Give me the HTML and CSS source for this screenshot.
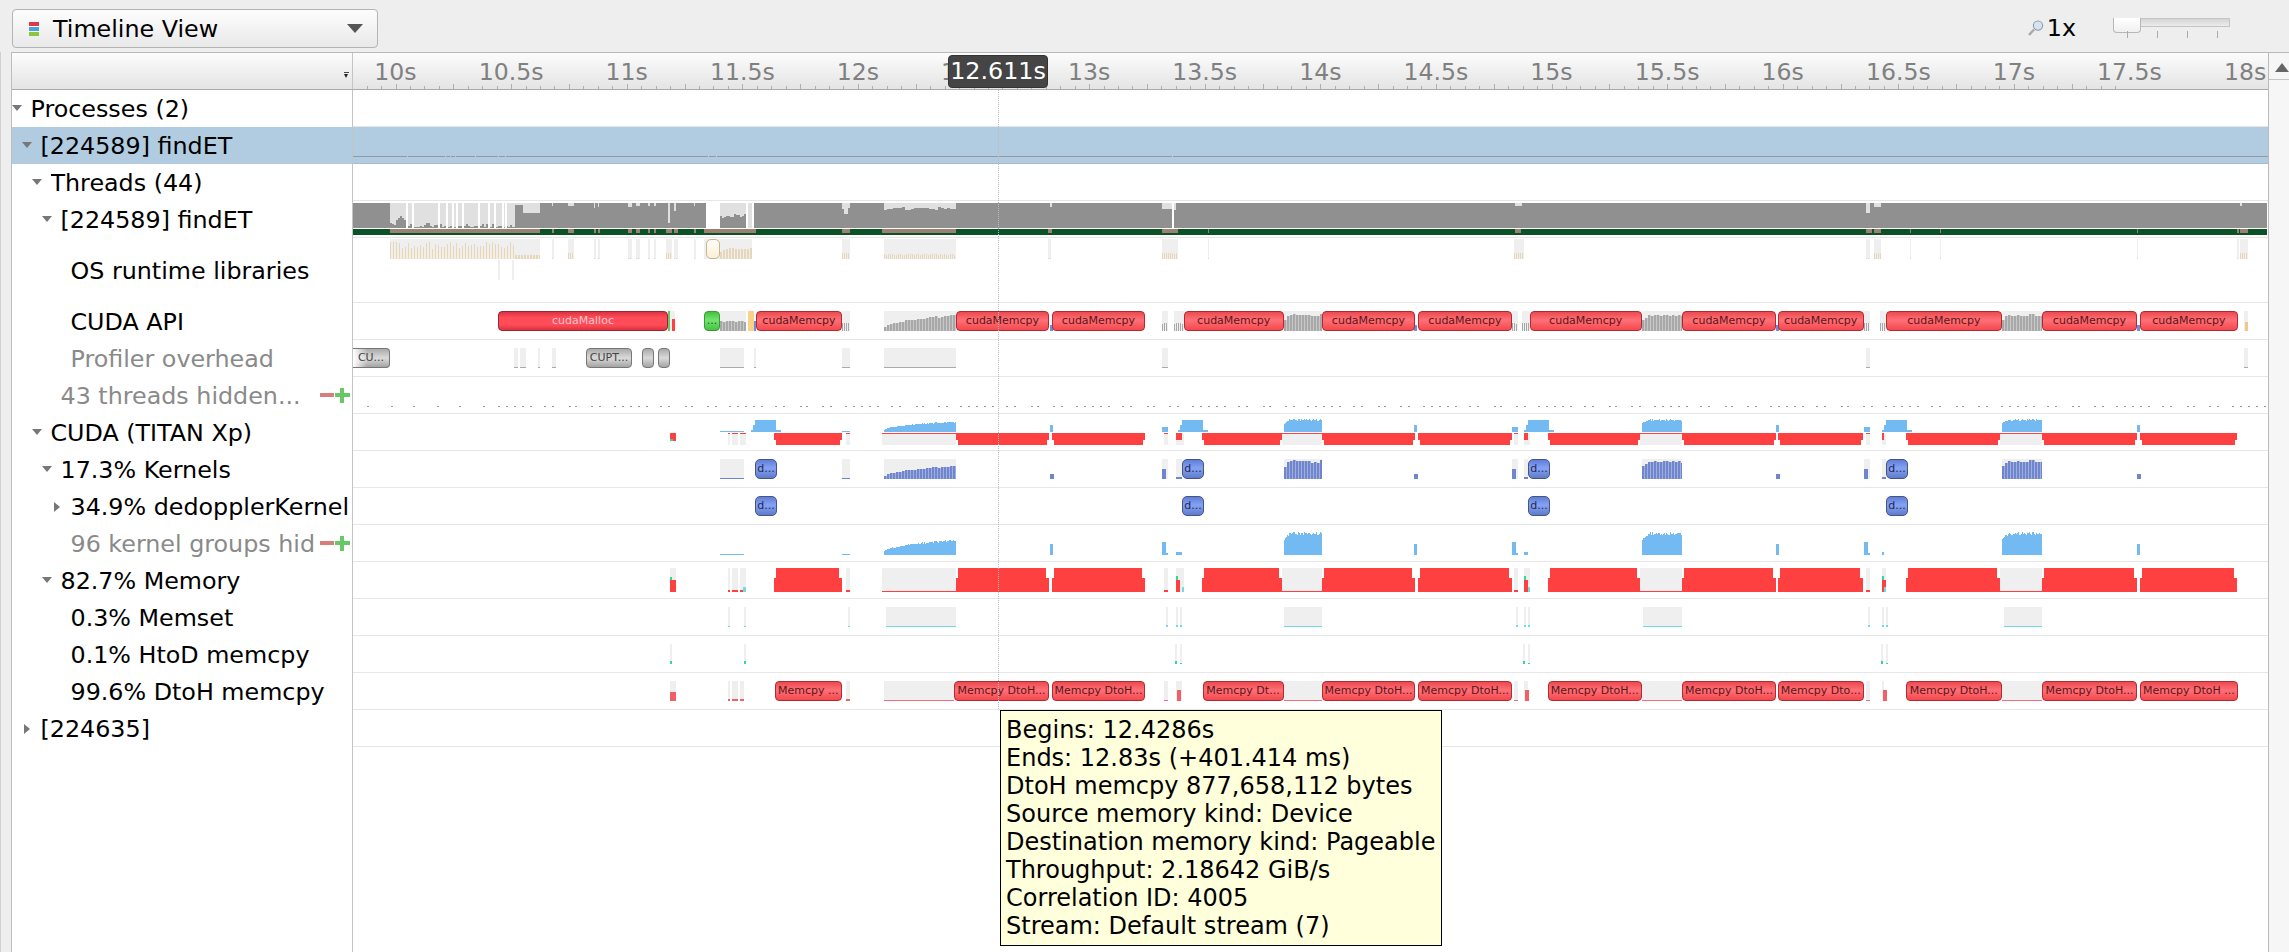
FILE: index.html

```html
<!DOCTYPE html>
<html lang="en">
<head>
    <meta charset="UTF-8">
    <title>Timeline View</title>
    <link rel="stylesheet" href="styles.css">
</head>
<body>
    <div class="toolbar">
        <div class="combo">
            <span class="combo-icon"><i class="c-red"></i><i class="c-blue"></i><i class="c-green"></i></span>
            <span class="combo-text">Timeline View</span>
            <span class="combo-arrow"></span>
        </div>
        <div class="zoom">
            <svg class="lens" width="16" height="16" viewBox="0 0 16 16">
                <path d="M1 15 L6 9.5" stroke="#a8a8a8" stroke-width="2.4" fill="none"/>
                <circle cx="10" cy="5.6" r="4.6" fill="#d6e4f2" stroke="#8f9aa6" stroke-width="1.1"/>
            </svg>
            <span class="zoom-text">1x</span>
            <div class="slider">
                <div class="slider-handle"></div>
                <div class="slider-track"></div>
                <div class="slider-ticks"><i></i><i></i><i></i><i></i></div>
            </div>
        </div>
    </div>

    <div class="view">
        <div class="gutter"></div>
        <div class="main">
            <div class="head">
                <div class="head-tree"><span class="head-menu"></span></div>
                <div class="ruler" id="ruler"></div>
            </div>

            <div class="row">
                <div class="label lv0"><span class="arrow down"></span><span class="name">Processes (2)</span></div>
                <div class="track"></div>
            </div>
            <div class="row selected">
                <div class="label lv1"><span class="arrow down"></span><span class="name">[224589] findET</span></div>
                <div class="track" id="tr-process"></div>
            </div>
            <div class="row">
                <div class="label lv2"><span class="arrow down"></span><span class="name">Threads (44)</span></div>
                <div class="track"></div>
            </div>
            <div class="row">
                <div class="label lv3"><span class="arrow down"></span><span class="name">[224589] findET</span></div>
                <div class="track" id="tr-thread"></div>
            </div>
            <div class="row tall">
                <div class="label lv4"><span class="arrow"></span><span class="name">OS runtime libraries</span></div>
                <div class="track" id="tr-os"></div>
            </div>
            <div class="row">
                <div class="label lv4"><span class="arrow"></span><span class="name">CUDA API</span></div>
                <div class="track" id="tr-api"></div>
            </div>
            <div class="row">
                <div class="label lv4 muted"><span class="arrow"></span><span class="name">Profiler overhead</span></div>
                <div class="track" id="tr-profiler"></div>
            </div>
            <div class="row">
                <div class="label lv3 muted"><span class="arrow"></span><span class="name">43 threads hidden...</span><span class="minus"></span><span class="plus"></span></div>
                <div class="track" id="tr-hidden"></div>
            </div>
            <div class="row">
                <div class="label lv2"><span class="arrow down"></span><span class="name">CUDA (TITAN Xp)</span></div>
                <div class="track" id="tr-cuda"></div>
            </div>
            <div class="row">
                <div class="label lv3"><span class="arrow down"></span><span class="name">17.3% Kernels</span></div>
                <div class="track" id="tr-kernels"></div>
            </div>
            <div class="row">
                <div class="label lv4"><span class="arrow right"></span><span class="name">34.9% dedopplerKernel</span></div>
                <div class="track" id="tr-dedoppler"></div>
            </div>
            <div class="row">
                <div class="label lv4 muted"><span class="arrow"></span><span class="name">96 kernel groups hid</span><span class="minus"></span><span class="plus"></span></div>
                <div class="track" id="tr-groups"></div>
            </div>
            <div class="row">
                <div class="label lv3"><span class="arrow down"></span><span class="name">82.7% Memory</span></div>
                <div class="track" id="tr-memory"></div>
            </div>
            <div class="row">
                <div class="label lv4"><span class="arrow"></span><span class="name">0.3% Memset</span></div>
                <div class="track" id="tr-memset"></div>
            </div>
            <div class="row">
                <div class="label lv4"><span class="arrow"></span><span class="name">0.1% HtoD memcpy</span></div>
                <div class="track" id="tr-htod"></div>
            </div>
            <div class="row">
                <div class="label lv4"><span class="arrow"></span><span class="name">99.6% DtoH memcpy</span></div>
                <div class="track" id="tr-dtoh"></div>
            </div>
            <div class="row">
                <div class="label lv1"><span class="arrow right"></span><span class="name">[224635]</span></div>
                <div class="track"></div>
            </div>
            <div class="filler">
                <div class="filler-tree"></div>
                <div class="filler-track"></div>
            </div>
        </div>
        <div class="scrollbar">
            <div class="scroll-up"><span></span></div>
        </div>
    </div>

    <div class="cursor-line"></div>
    <div class="cursor-time">12.611s</div>
    <div class="tooltip">
        <div>Begins: 12.4286s</div>
        <div>Ends: 12.83s (+401.414 ms)</div>
        <div>DtoH memcpy 877,658,112 bytes</div>
        <div>Source memory kind: Device</div>
        <div>Destination memory kind: Pageable</div>
        <div>Throughput: 2.18642 GiB/s</div>
        <div>Correlation ID: 4005</div>
        <div>Stream: Default stream (7)</div>
    </div>

    <script src="timeline.js"></script>
</body>
</html>
```

FILE: styles.css

```css
* {
    box-sizing: border-box;
}
html, body {
    margin: 0;
    height: 100%;
}
body {
    font-family: 'DejaVu Sans', sans-serif;
    font-size: 23.8px;
    color: #000;
    background: #eeeeee;
    overflow: hidden;
}

/* top bar */
.toolbar {
    display: flex;
    height: 52px;
    padding: 9px 0 0 12px;
}
.combo {
    display: flex;
    align-items: center;
    width: 366px;
    height: 39px;
    padding: 0 14px 0 16px;
    background: linear-gradient(#fdfdfd, #e9e9e9);
    border: 1px solid #b4b4b4;
    border-radius: 4px;
}
.combo-icon {
    display: flex;
    flex-direction: column;
    gap: 1px;
    width: 10px;
    margin-right: 14px;
}
.combo-icon i {
    display: block;
    height: 4px;
}
.c-red { background: #dc3a45; }
.c-blue { background: #4ba3dc; }
.c-green { background: #8cc63f; }
.combo-text {
    flex: 1;
}
.combo-arrow {
    border-left: 8px solid transparent;
    border-right: 8px solid transparent;
    border-top: 9px solid #555;
}
.zoom {
    display: flex;
    margin-left: auto;
    padding-right: 59px;
}
.lens {
    margin: 11px 3px 0 0;
}
.zoom-text {
    margin: 4px 37px 0 0;
    line-height: 30px;
}
.slider {
    position: relative;
    display: flex;
    width: 117px;
    height: 29px;
    margin-top: 9px;
}
.slider-handle {
    width: 28px;
    height: 15px;
    background: linear-gradient(#fff, #f0f0f0);
    border: 1px solid #b8b8b8;
    border-top: none;
    border-radius: 0 0 4px 4px;
}
.slider-track {
    flex: 1;
    height: 9px;
    background: linear-gradient(#d4d4d4, #ececec);
    border: 1px solid #c4c4c4;
    border-left: none;
}
.slider-ticks {
    position: absolute;
    left: 14px;
    top: 13px;
    display: flex;
    gap: 29px;
}
.slider-ticks i {
    display: block;
    width: 1px;
    height: 7px;
    background: #aaa;
}

/* main area */
.view {
    display: flex;
    height: 900px;
}
.gutter {
    width: 12px;
    border-left: 1px solid #d0d0d0;
    border-right: 1px solid #bdbdbd;
}
.main {
    flex: 1;
    display: flex;
    flex-direction: column;
    min-width: 0;
    background: #fff;
}
.head {
    display: flex;
    flex: none;
    height: 38px;
    background: linear-gradient(#fcfcfc, #e4e4e4);
    border-top: 1px solid #b8b8b8;
    border-bottom: 1px solid #aaa;
}
.head-tree {
    position: relative;
    width: 341px;
    border-right: 1px solid #c4c4c4;
}
.head-menu {
    position: absolute;
    left: 332px;
    top: 19px;
    width: 5px;
    border-top: 1px solid #444;
}
.head-menu::after {
    content: "";
    position: absolute;
    left: 0;
    top: 1px;
    border-left: 2.5px solid transparent;
    border-right: 2.5px solid transparent;
    border-top: 4px solid #222;
}
.ruler {
    position: relative;
    flex: 1;
    overflow: hidden;
    color: #808080;
    font-size: 23.6px;
}
.ruler svg {
    position: absolute;
    left: 0;
    top: 0;
}
.ruler span {
    position: absolute;
    top: 3px;
    line-height: 32px;
    transform: translateX(-50%);
    white-space: nowrap;
}

/* rows */
.row {
    display: flex;
    flex: none;
    height: 37px;
}
.row.tall {
    height: 65px;
}
.label {
    display: flex;
    align-items: center;
    width: 341px;
    flex: none;
    border-right: 1px solid #c4c4c4;
    padding-right: 2px;
}
.lv0 { padding-left: 0; }
.lv1 { padding-left: 10px; }
.lv2 { padding-left: 20px; }
.lv3 { padding-left: 30px; }
.lv4 { padding-left: 40px; }
.muted {
    color: #8a8a8a;
}
.arrow {
    flex: none;
    width: 18.5px;
}
.arrow.down::before {
    content: "";
    display: block;
    width: 0;
    border-left: 5px solid transparent;
    border-right: 5px solid transparent;
    border-top: 6px solid #777;
    margin-top: -1px;
}
.arrow.right::before {
    content: "";
    display: block;
    width: 0;
    margin-left: 2px;
    border-top: 5px solid transparent;
    border-bottom: 5px solid transparent;
    border-left: 6px solid #777;
}
.name {
    flex: 1;
    min-width: 0;
    overflow: hidden;
    white-space: nowrap;
}
.minus, .plus {
    position: relative;
    flex: none;
    width: 15px;
    height: 15px;
}
.minus::before {
    content: "";
    position: absolute;
    left: 0;
    top: 5px;
    width: 14px;
    height: 4px;
    background: #d67d7d;
}
.plus::before {
    content: "";
    position: absolute;
    left: 0;
    top: 5px;
    width: 15px;
    height: 4px;
    background: #68c868;
}
.plus::after {
    content: "";
    position: absolute;
    left: 5px;
    top: 0;
    width: 4px;
    height: 15px;
    background: #68c868;
}
.track {
    position: relative;
    flex: 1;
    min-width: 0;
    overflow: hidden;
    border-bottom: 1px solid #e6e6e6;
}
.track svg {
    position: absolute;
    left: 0;
    top: 0;
    shape-rendering: crispEdges;
}
.selected .label, .selected .track {
    background: #b1cce1;
}
.selected .track {
    border-bottom: 1px solid #a6bccd;
}
.filler {
    flex: 1;
    display: flex;
}
.filler-tree {
    width: 341px;
    border-right: 1px solid #c4c4c4;
}

/* blocks on the tracks */
.blk {
    position: absolute;
    height: 20px;
    overflow: hidden;
    font-size: 11px;
    line-height: 18px;
    text-align: center;
    white-space: nowrap;
    border: 1px solid;
    border-radius: 4px;
}
.blk-malloc {
    color: #ffc8cc;
    background: linear-gradient(#d83240, #ff4c58 30%, #ff4c58 70%, #dc3440);
    border-color: #9a2530;
}
.blk-memcpy {
    color: #5c1518;
    background: linear-gradient(#ea4a50, #ff7076 45%, #f4484e);
    border-color: #b02a30;
}
.blk-green {
    color: #1c5a1c;
    background: linear-gradient(#42c23e, #74e470 45%, #44c240);
    border-color: #3a9a38;
}
.blk-grey {
    color: #444;
    background: linear-gradient(#aaa, #dadada 50%, #a4a4a4);
    border-color: #777;
}
.blk-fade {
    background: linear-gradient(90deg, #fff, rgba(255,255,255,0) 40%), linear-gradient(#aaa, #dadada 50%, #a4a4a4);
    border-left: none;
    border-radius: 0 4px 4px 0;
}
.blk-kernel {
    color: #1e2a55;
    background: linear-gradient(#5f7ed8, #86a2f2 45%, #5f7bcc);
    border-color: #45557f;
    border-radius: 5px;
}
.blk-pale {
    background: linear-gradient(#fffdf8, #fdeed8);
    border-color: #c8b48f;
    border-radius: 5px;
}

/* scrollbar */
.scrollbar {
    width: 21px;
    flex: none;
    background: #f6f6f6;
    border-left: 1px solid #bbb;
}
.scroll-up {
    height: 28px;
    padding: 10px 0 0 6px;
    border-top: 1px solid #b8b8b8;
    border-bottom: 1px solid #c4c4c4;
}
.scroll-up span {
    display: block;
    width: 0;
    border-left: 7px solid transparent;
    border-right: 7px solid transparent;
    border-bottom: 9px solid #666;
}

/* things that lie over the rows */
.cursor-line {
    position: absolute;
    left: 998px;
    top: 90px;
    height: 619px;
    border-left: 1px dotted #bbb;
}
.cursor-time {
    position: absolute;
    left: 948px;
    top: 55px;
    width: 100px;
    height: 33px;
    line-height: 31px;
    text-align: center;
    color: #fff;
    background: #454545;
    border: 1px solid #333;
    border-radius: 4px;
}
.tooltip {
    position: absolute;
    left: 1000px;
    top: 710px;
    width: 442px;
    padding: 5px 0 0 5px;
    height: 236px;
    font-size: 24px;
    line-height: 28px;
    white-space: nowrap;
    background: #ffffdc;
    border: 1px solid #000;
}
```

FILE: timeline.js

```js
// x and y in this file are page pixels, the svg viewBox of each track takes care of the offset
var TRACK_X = 353;
var TRACK_W = 1915;

var GREY = '#909090';
var PALE = '#e0e0e0';
var LIGHT = '#efefef';
var BROWN = '#9a8070';
var TAN = '#e6d6ba';
var BAR = '#a8a8a8';
var BAR_SOFT = '#c8c8c8';
var RED = '#ff4040';
var BLUE = '#74baf2';
var PURPLE = '#7086cc';
var PURPLE_SOFT = '#a2aee0';
var CYAN = '#6fdce0';
var TEAL = '#30d8a0';

var MEMCPY = [[756,842],[956,1049],[1052,1145],[1184,1283.5],[1322,1415],[1418,1512],[1530,1641.5],[1682,1776],[1778,1863.5],[1886,2001.6],[2042,2137],[2140,2237.7]];
var DTOH = [
    [774.5,842,'Memcpy ...'],[954,1049,'Memcpy DtoH...'],[1052,1145,'Memcpy DtoH...'],
    [1202.5,1283.5,'Memcpy Dt...'],[1322,1415,'Memcpy DtoH...'],[1418,1512,'Memcpy DtoH...'],
    [1548,1641.5,'Memcpy DtoH...'],[1682,1776,'Memcpy DtoH...'],[1778,1863.5,'Memcpy Dto...'],
    [1906,2001.6,'Memcpy DtoH...'],[2042,2137,'Memcpy DtoH...'],[2140,2237.7,'Memcpy DtoH ...']
];
// red stretches of the CUDA and Memory rows
var COPIES = [[774,842],[956,1049],[1052,1145],[1202,1282],[1322,1415],[1418,1512],[1548,1640],[1682,1776],[1778,1863],[1906,2000],[2042,2137],[2140,2237]];
// idle stretch between the copies, where the kernel runs
var LOADS = [[884,956,'rise'],[1284,1322,'flat'],[1642,1682,'flat'],[2002,2042,'flat']];
// short notches between two copies
var NOTCHES = [1050,1414,1776,2137];
// groups of slivers before each kernel block
var GAPS = [
    {a:1162, b:1174, c:1184, k:1182},
    {a:1512, b:1522, c:1530, k:1528},
    {a:1864, b:1880, c:1886, k:1886}
];
var KERNELS = [755,1182,1528,1886];

function rnd(i) {
    var v = Math.sin(i * 12.9898 + 4.1) * 43758.5453;
    return v - Math.floor(v);
}

function rect(list, x0, x1, y0, y1, color) {
    list.push('<rect x="' + x0 + '" y="' + y0 + '" width="' + (x1 - x0) + '" height="' + (y1 - y0) + '" fill="' + color + '"/>');
}

function shape(kind, t) {
    if (kind === 'rise') return 0.22 + 0.78 * Math.sqrt(t);
    if (kind === 'flat') return Math.min(1, 0.72 + t * 2);
    return 0.7;
}

// soft, when given, fills the one pixel between two bars
function bars(list, x0, x1, bottom, maxH, color, kind, step, soft) {
    for (var x = x0; x < x1; x += step) {
        var t = (x - x0) / (x1 - x0);
        var h = Math.round(maxH * shape(kind, t) * (0.86 + 0.14 * rnd(x)));
        var end = Math.min(x + step - (step > 1 ? 1 : 0), x1);
        rect(list, x, end, bottom - h, bottom, color);
        if (soft && end < x1) rect(list, end, end + 1, bottom - h, bottom, soft);
    }
}

function draw(id, list, blocks) {
    var track = document.getElementById(id);
    var top = Math.round(track.getBoundingClientRect().top);
    var h = track.clientHeight;
    track.innerHTML = '<svg width="' + TRACK_W + '" height="' + h + '" viewBox="' + TRACK_X + ' ' + top + ' ' + TRACK_W + ' ' + h + '">' + list.join('') + '</svg>';
    (blocks || []).forEach(function(b) {
        var el = document.createElement('div');
        el.className = 'blk ' + b.cls;
        el.style.left = (b.x0 - TRACK_X) + 'px';
        el.style.top = (b.y - top) + 'px';
        el.style.width = (b.x1 - b.x0) + 'px';
        el.textContent = b.text || '';
        track.appendChild(el);
    });
}

function drawRuler() {
    var ruler = document.getElementById('ruler');
    var pxPerSec = 231.2;
    var x0 = 395.5 - TRACK_X;
    var marks = [];
    for (var i = -3; i < 120; i++) {
        var x = Math.round(x0 + i * pxPerSec / 16);
        rect(marks, x, x + 1, i % 4 === 0 ? 31 : 33, 36, '#aeaeae');
    }
    var html = '<svg width="' + TRACK_W + '" height="36">' + marks.join('') + '</svg>';
    for (var t = 10; t <= 18; t += 0.5) {
        html += '<span style="left:' + (x0 + (t - 10) * pxPerSec) + 'px">' + t + 's</span>';
    }
    ruler.innerHTML = html;
}

function drawProcess() {
    var list = [];
    rect(list, 353, 2268, 156, 157, '#8e99a5');
    [407, 445, 450, 455, 475, 498, 505, 708, 716, 1172].forEach(function(x) {
        rect(list, x, x + 1, 156, 157, '#b1cce1');
    });
    draw('tr-process', list);
}

function drawThread() {
    var list = [];
    rect(list, 353, 2267, 203, 228, GREY);
    // long allocation at the start
    rect(list, 390, 540, 203, 228, PALE);
    for (var x = 390; x < 515; x += 2) {
        var h = 1 + Math.round(rnd(x) * rnd(x + 3) * 5);
        if (x > 394 && x < 405) h = 12 - Math.abs(x - 400);
        rect(list, x, x + 2, 228 - h, 228, GREY);
    }
    rect(list, 515, 523, 205, 228, GREY);
    rect(list, 523, 540, 213, 228, GREY);
    [406, 412, 438, 446, 452, 456, 462, 478, 488, 494, 502, 505].forEach(function(x) {
        rect(list, x, x + 2, 203, 228, '#fff');
    });
    // small notches from the top
    [[552,553,3],[568,574,3],[594,595,5],[598,599,4],[628,632,4],[636,640,3],[648,650,3],[654,656,3],[668,670,20],[674,676,8],[694,695,3],
     [842,844,6],[844,848,11],[848,850,5],[1050,1052,4],[1162,1172,6],[1174,1176,7],[1515,1522,3],[1866,1870,10],[1874,1881,4],[2240,2242,3]
    ].forEach(function(n) {
        rect(list, n[0], n[1], 203, 203 + n[2], PALE);
    });
    for (x = 884; x < 956; x += 3) {
        rect(list, x, x + 3, 203, 207 + Math.round(rnd(x) * 3), PALE);
    }
    // gap before the first copy
    rect(list, 706, 720, 203, 228, '#fff');
    rect(list, 720, 746, 203, 228, PALE);
    for (x = 720; x < 746; x += 2) {
        rect(list, x, x + 2, 214 + Math.round(rnd(x) * 4), 228, GREY);
    }
    rect(list, 746, 748, 203, 228, '#fff');
    rect(list, 748, 752, 203, 228, PALE);
    rect(list, 752, 754, 203, 228, '#fff');
    rect(list, 1172, 1174, 203, 228, '#fff');
    // green band
    rect(list, 353, 2267, 229, 235, '#0b5229');
    [[390,540],[552,554],[568,574],[594,596],[598,600],[628,632],[636,640],[648,650],[654,656],[666,672],[674,678],[694,696],
     [704,756],[842,850],[882,956],[1048,1052],[1162,1178],[1208,1209],[1515,1521],[1866,1872],[1874,1881],[1910,1911],[1940,1941],[2137,2138],[2237,2239],[2240,2248]
    ].forEach(function(b) {
        rect(list, b[0], b[1], 229, 233, BROWN);
    });
    draw('tr-thread', list);
}

function drawOs() {
    var list = [];
    rect(list, 390, 540, 239, 259, LIGHT);
    for (var x = 390; x < 515; x += 3) {
        rect(list, x, x + 1, 259 - Math.round(10 + rnd(x) * 8), 259, TAN);
        rect(list, x + 1, x + 2, 252, 259, '#fbeeda');
    }
    bars(list, 515, 540, 259, 6, TAN, 'mid', 3);
    [[552,554],[568,574],[594,596],[598,600],[628,632],[636,640],[648,650],[654,656],[666,672],[674,678],[694,696],[842,850],[1048,1051],[1162,1178],[1208,1209],[1514,1524],[1866,1870],[1874,1881],[1910,1911],[1940,1941],[2137,2138],[2237,2239],[2240,2248]
    ].forEach(function(b) {
        rect(list, b[0], b[1], 239, 259, LIGHT);
        bars(list, b[0], b[1], 259, b[1] - b[0] > 5 ? 9 : 2, TAN, 'mid', 2);
    });
    rect(list, 704, 752, 239, 259, LIGHT);
    bars(list, 720, 752, 259, 11, TAN, 'flat', 3);
    rect(list, 884, 956, 239, 259, LIGHT);
    bars(list, 884, 956, 259, 7, TAN, 'mid', 2);
    rect(list, 498, 500, 260, 280, LIGHT);
    rect(list, 512, 514, 260, 280, LIGHT);
    draw('tr-os', list, [{x0:706, x1:720, y:239, cls:'blk-pale'}]);
}

function drawApi() {
    var list = [];
    var blocks = [
        {x0:498, x1:668, y:311, cls:'blk-malloc', text:'cudaMalloc'},
        {x0:704, x1:720, y:311, cls:'blk-green', text:'...'}
    ];
    rect(list, 668, 675, 311, 331, LIGHT);
    rect(list, 668, 670, 311, 331, '#68c868');
    rect(list, 672, 675, 319, 331, RED);
    rect(list, 720, 746, 311, 331, LIGHT);
    bars(list, 720, 746, 331, 15, BAR, 'mid', 3, BAR_SOFT);
    rect(list, 748, 754, 311, 331, '#fad08a');
    rect(list, 754, 756, 321, 331, '#6f8fd8');
    rect(list, 842, 850, 311, 331, LIGHT);
    bars(list, 842, 850, 331, 13, BAR, 'mid', 2);
    LOADS.forEach(function(l) {
        rect(list, l[0], l[1], 311, 331, LIGHT);
        bars(list, l[0], l[1], 331, 17, BAR, l[2], 3, BAR_SOFT);
    });
    GAPS.forEach(function(g) {
        rect(list, g.a, g.a + 6, 311, 331, LIGHT);
        bars(list, g.a, g.a + 6, 331, 12, BAR, 'mid', 2);
        rect(list, g.b, g.c, 311, 331, LIGHT);
        bars(list, g.b, g.c, 331, 12, BAR, 'mid', 2);
    });
    NOTCHES.forEach(function(x) {
        rect(list, x, x + 3, 325, 331, '#6f8fd8');
    });
    rect(list, 2244, 2248, 311, 331, LIGHT);
    rect(list, 2245, 2248, 322, 331, '#f0c888');
    MEMCPY.forEach(function(m) {
        blocks.push({x0:m[0], x1:m[1], y:311, cls:'blk-memcpy', text:'cudaMemcpy'});
    });
    draw('tr-api', list, blocks);
}

function drawProfiler() {
    var list = [];
    [[514,518],[520,526],[538,540],[552,556],[720,744],[754,756],[842,850],[884,956],[1162,1168],[1866,1870],[2244,2248]].forEach(function(b) {
        rect(list, b[0], b[1], 348, 368, LIGHT);
        rect(list, b[0], b[1], 367, 368, '#aaa');
    });
    draw('tr-profiler', list, [
        {x0:353, x1:390, y:348, cls:'blk-grey blk-fade', text:'CU...'},
        {x0:586, x1:632, y:348, cls:'blk-grey', text:'CUPT...'},
        {x0:642, x1:654, y:348, cls:'blk-grey'},
        {x0:658, x1:670, y:348, cls:'blk-grey'}
    ]);
}

function drawHidden() {
    var list = [];
    [367, 391, 413, 437, 459, 483].forEach(function(x) {
        rect(list, x, x + 2, 406, 407, '#999');
    });
    // the sampling dots repeat about every half second
    var offsets = [0, 8, 16, 24, 32, 46, 54, 71, 77, 93, 101];
    for (var i = 0; i < 16; i++) {
        offsets.forEach(function(o) {
            var x = Math.round(498 + i * 115.6 + o);
            rect(list, x, x + 2, 406, 407, '#999');
        });
    }
    draw('tr-hidden', list);
}

function drawCuda() {
    var list = [];
    // first burst of small transfers
    rect(list, 670, 676, 433, 441, RED);
    rect(list, 670, 673, 439, 441, TEAL);
    rect(list, 720, 744, 431, 432, BLUE);
    [[728,730],[732,738],[740,746],[846,850]].forEach(function(b) {
        rect(list, b[0], b[1], 433, 445, LIGHT);
        rect(list, b[0], b[1], 433, 434, RED);
    });
    rect(list, 842, 850, 431, 432, BLUE);
    // blue humps of the kernel blocks
    KERNELS.forEach(function(k) {
        rect(list, k - 4, k + 26, 430, 432, BLUE);
        rect(list, k, k + 21, 420, 432, BLUE);
        rect(list, k - 2, k, 425, 432, BLUE);
    });
    LOADS.forEach(function(l) {
        rect(list, l[0] - 2, l[1], 433, 445, LIGHT);
        rect(list, l[0] - 2, l[1], 433, 434, RED);
        bars(list, l[0], l[1], 432, l[2] === 'rise' ? 11 : 13, BLUE, l[2], 1);
    });
    NOTCHES.forEach(function(x) {
        rect(list, x, x + 3, 425, 432, BLUE);
    });
    GAPS.forEach(function(g) {
        rect(list, g.a, g.a + 6, 427, 432, BLUE);
        rect(list, g.a + 2, g.a + 6, 433, 445, LIGHT);
        rect(list, g.a + 2, g.a + 6, 433, 434, RED);
        rect(list, g.b + 2, g.c, 433, 445, LIGHT);
        rect(list, g.b + 2, g.c - 2, 433, 440, RED);
    });
    COPIES.forEach(function(c) {
        rect(list, c[0], c[1], 433, 440, RED);
        rect(list, c[0] + 2, c[1] - 2, 440, 445, RED);
    });
    draw('tr-cuda', list);
}

function drawKernels() {
    var list = [];
    [[720,744],[842,850]].forEach(function(b) {
        rect(list, b[0], b[1], 459, 479, LIGHT);
        rect(list, b[0], b[1], 478, 479, PURPLE);
    });
    LOADS.forEach(function(l) {
        rect(list, l[0], l[1], 459, 479, LIGHT);
        bars(list, l[0], l[1], 479, l[2] === 'rise' ? 14 : 19, PURPLE, l[2], 3, PURPLE_SOFT);
    });
    NOTCHES.forEach(function(x) {
        rect(list, x, x + 4, 474, 479, PURPLE);
    });
    GAPS.forEach(function(g) {
        rect(list, g.a, g.a + 6, 459, 479, LIGHT);
        rect(list, g.a, g.a + 4, 469, 479, PURPLE);
        rect(list, g.b + 2, g.k, 459, 479, LIGHT);
        rect(list, g.b + 2, g.k, 477, 479, PURPLE);
    });
    draw('tr-kernels', list, KERNELS.map(function(k) {
        return {x0:k, x1:k + 22, y:459, cls:'blk-kernel', text:'d...'};
    }));
}

function drawDedoppler() {
    draw('tr-dedoppler', [], KERNELS.map(function(k) {
        return {x0:k, x1:k + 22, y:496, cls:'blk-kernel', text:'d...'};
    }));
}

function drawGroups() {
    var list = [];
    rect(list, 720, 744, 554, 555, BLUE);
    rect(list, 842, 850, 554, 555, BLUE);
    LOADS.forEach(function(l) {
        bars(list, l[0], l[1], 555, l[2] === 'rise' ? 16 : 23, BLUE, l[2], 1);
    });
    NOTCHES.forEach(function(x) {
        rect(list, x, x + 3, 544, 555, BLUE);
    });
    GAPS.forEach(function(g) {
        rect(list, g.a, g.a + 4, 542, 555, BLUE);
        rect(list, g.a + 4, g.a + 6, 553, 555, BLUE);
        rect(list, g.b + 2, g.c - 2, 552, 555, BLUE);
    });
    draw('tr-groups', list);
}

function drawMemory() {
    var list = [];
    rect(list, 670, 676, 568, 592, LIGHT);
    rect(list, 670, 676, 580, 592, RED);
    rect(list, 670, 672, 577, 580, TEAL);
    [[728,730],[732,738],[740,746],[846,850]].forEach(function(b) {
        rect(list, b[0], b[1], 568, 592, LIGHT);
        rect(list, b[0], b[1], 590, 592, RED);
    });
    rect(list, 743, 746, 587, 592, CYAN);
    LOADS.forEach(function(l) {
        rect(list, l[0] - 2, l[1], 568, 592, LIGHT);
        rect(list, l[0] - 2, l[1], 591, 592, RED);
    });
    GAPS.forEach(function(g) {
        rect(list, g.a + 2, g.a + 6, 568, 592, LIGHT);
        rect(list, g.a + 2, g.a + 6, 590, 592, RED);
        rect(list, g.b + 2, g.c, 568, 592, LIGHT);
        rect(list, g.b + 2, g.b + 6, 580, 592, RED);
        rect(list, g.b + 2, g.b + 4, 576, 580, TEAL);
        rect(list, g.c - 2, g.c, 587, 592, CYAN);
    });
    COPIES.forEach(function(c) {
        rect(list, c[0], c[1], 578, 592, RED);
        rect(list, c[0] + 2, c[1] - 3, 568, 578, RED);
    });
    draw('tr-memory', list);
}

function drawMemset() {
    var list = [];
    [[728,730],[744,746],[848,850]].forEach(function(b) {
        rect(list, b[0], b[1], 607, 627, LIGHT);
        rect(list, b[0], b[1], 626, 627, CYAN);
    });
    [[886,956],[1284,1322],[1643,1682],[2004,2042]].forEach(function(b) {
        rect(list, b[0], b[1], 607, 627, LIGHT);
        rect(list, b[0], b[1], 626, 627, CYAN);
    });
    GAPS.forEach(function(g) {
        [[g.a + 4, g.a + 6], [g.b + 2, g.b + 4], [g.b + 6, g.b + 8]].forEach(function(b) {
            rect(list, b[0], b[1], 607, 627, LIGHT);
            rect(list, b[0], b[1], 625, 627, CYAN);
        });
    });
    draw('tr-memset', list);
}

function drawHtod() {
    var list = [];
    [[670,672],[744,746]].forEach(function(b) {
        rect(list, b[0], b[1], 644, 664, LIGHT);
        rect(list, b[0], b[1], 661, 664, TEAL);
    });
    GAPS.forEach(function(g) {
        rect(list, g.b + 1, g.b + 3, 644, 664, LIGHT);
        rect(list, g.b + 1, g.b + 3, 661, 664, TEAL);
        rect(list, g.b + 6, g.b + 8, 644, 664, LIGHT);
        rect(list, g.b + 6, g.b + 8, 663, 664, TEAL);
    });
    draw('tr-htod', list);
}

function drawDtoh() {
    var list = [];
    rect(list, 670, 676, 681, 701, LIGHT);
    rect(list, 670, 676, 692, 701, '#f06068');
    [[728,730],[732,738],[740,744],[846,850]].forEach(function(b) {
        rect(list, b[0], b[1], 681, 701, LIGHT);
        rect(list, b[0], b[1], 699, 701, '#f06068');
    });
    [[884,954],[1284,1322],[1642,1682],[2002,2042]].forEach(function(b) {
        rect(list, b[0], b[1], 681, 701, LIGHT);
        rect(list, b[0], b[1], 700, 701, '#f07078');
    });
    GAPS.forEach(function(g) {
        rect(list, g.a + 2, g.a + 6, 681, 701, LIGHT);
        rect(list, g.a + 2, g.a + 6, 700, 701, '#f07078');
        rect(list, g.b + 2, g.c - 2, 681, 701, LIGHT);
        rect(list, g.b + 3, g.b + 7, 690, 701, '#f06068');
    });
    draw('tr-dtoh', list, DTOH.map(function(d) {
        return {x0:d[0], x1:d[1], y:681, cls:'blk-memcpy', text:d[2]};
    }));
}

drawRuler();
drawProcess();
drawThread();
drawOs();
drawApi();
drawProfiler();
drawHidden();
drawCuda();
drawKernels();
drawDedoppler();
drawGroups();
drawMemory();
drawMemset();
drawHtod();
drawDtoh();
```
